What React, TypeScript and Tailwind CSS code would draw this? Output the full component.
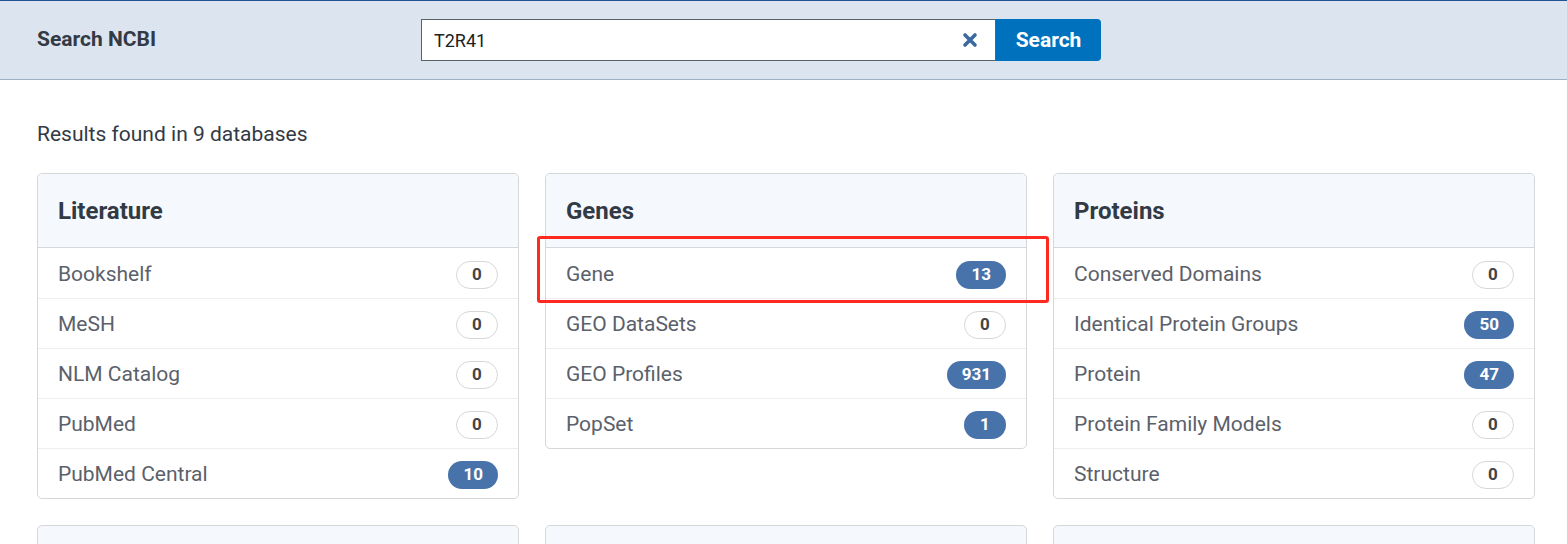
const groups = [
  {
    title: "Literature",
    rows: [
      ["Bookshelf", 0],
      ["MeSH", 0],
      ["NLM Catalog", 0],
      ["PubMed", 0],
      ["PubMed Central", 10],
    ],
  },
  {
    title: "Genes",
    rows: [
      ["Gene", 13],
      ["GEO DataSets", 0],
      ["GEO Profiles", 931],
      ["PopSet", 1],
    ],
  },
  {
    title: "Proteins",
    rows: [
      ["Conserved Domains", 0],
      ["Identical Protein Groups", 50],
      ["Protein", 47],
      ["Protein Family Models", 0],
      ["Structure", 0],
    ],
  },
] as { title: string; rows: [string, number][] }[];

function Badge({ n }: { n: number }) {
  if (n === 0) {
    return (
      <span className="flex h-[28px] min-w-[42px] items-center justify-center rounded-full border border-[#d6d7d9] bg-white px-3 text-[17px] font-bold text-[#444]">
        0
      </span>
    );
  }
  return (
    <span className="flex h-[28px] min-w-[42px] items-center justify-center rounded-full bg-[#4773aa] px-[15px] text-[17px] font-bold text-white">
      {n}
    </span>
  );
}

export default function App() {
  return (
    <div className="min-h-[544px] overflow-hidden bg-white font-['Roboto',sans-serif] text-[#333]">
      <header className="flex h-[80px] items-center border-t border-b border-t-[#205493] border-b-[#9eb1c7] bg-[#dce4ef]">
        <div className="w-[421px] pl-[37px] text-[21px] font-bold text-[#323a45]">Search NCBI</div>
        <div className="flex h-[42px] w-[575px] items-center border border-[#5b616b] bg-white">
          <span className="flex-1 pl-[12px] text-[18px] text-[#212121]">T2R41</span>
          <svg width="16" height="16" viewBox="0 0 16 16" className="mr-[17px]">
            <path d="M3 3 L13 13 M13 3 L3 13" stroke="#3a6aa1" strokeWidth="3.6" strokeLinecap="round" />
          </svg>
        </div>
        <button className="flex h-[42px] w-[105px] items-center justify-center rounded-r-[4px] bg-[#0071bc] pt-[2px] text-[21px] font-bold text-white">
          Search
        </button>
      </header>

      <main className="px-[37px] pt-[38px]">
        <p className="text-[21px] leading-[32px] text-[#323a45]">Results found in 9 databases</p>
        <div className="mt-[23px] grid grid-cols-[482px_482px_482px] items-start gap-[26px]">
          {groups.map((g) => (
            <div key={g.title} className="rounded-[5px] border border-[#d6d7d9] bg-white">
              <div className="flex h-[74px] items-center rounded-t-[5px] border-b border-[#d6d7d9] bg-[#f5f9fd] pl-[20px] text-[24px] font-bold text-[#323a45]">
                {g.title}
              </div>
              {g.rows.map(([name, n], i) => (
                <div
                  key={name}
                  className={
                    "flex h-[50px] items-center justify-between pl-[20px] pr-[20px] pt-[3px] " +
                    (i > 0 ? "border-t border-[#eceef0]" : "")
                  }
                >
                  <span className="text-[21px] text-[#5b616b]">{name}</span>
                  <Badge n={n} />
                </div>
              ))}
            </div>
          ))}
          {[0, 1, 2].map((i) => (
            <div key={i} className="h-[74px] rounded-[5px] border border-[#d6d7d9] bg-[#f5f9fd]" />
          ))}
        </div>
      </main>

      <div className="absolute left-[537px] top-[236px] h-[67px] w-[512px] rounded-[3px] border-[3px] border-[#ff2a1f]" />
    </div>
  );
}
